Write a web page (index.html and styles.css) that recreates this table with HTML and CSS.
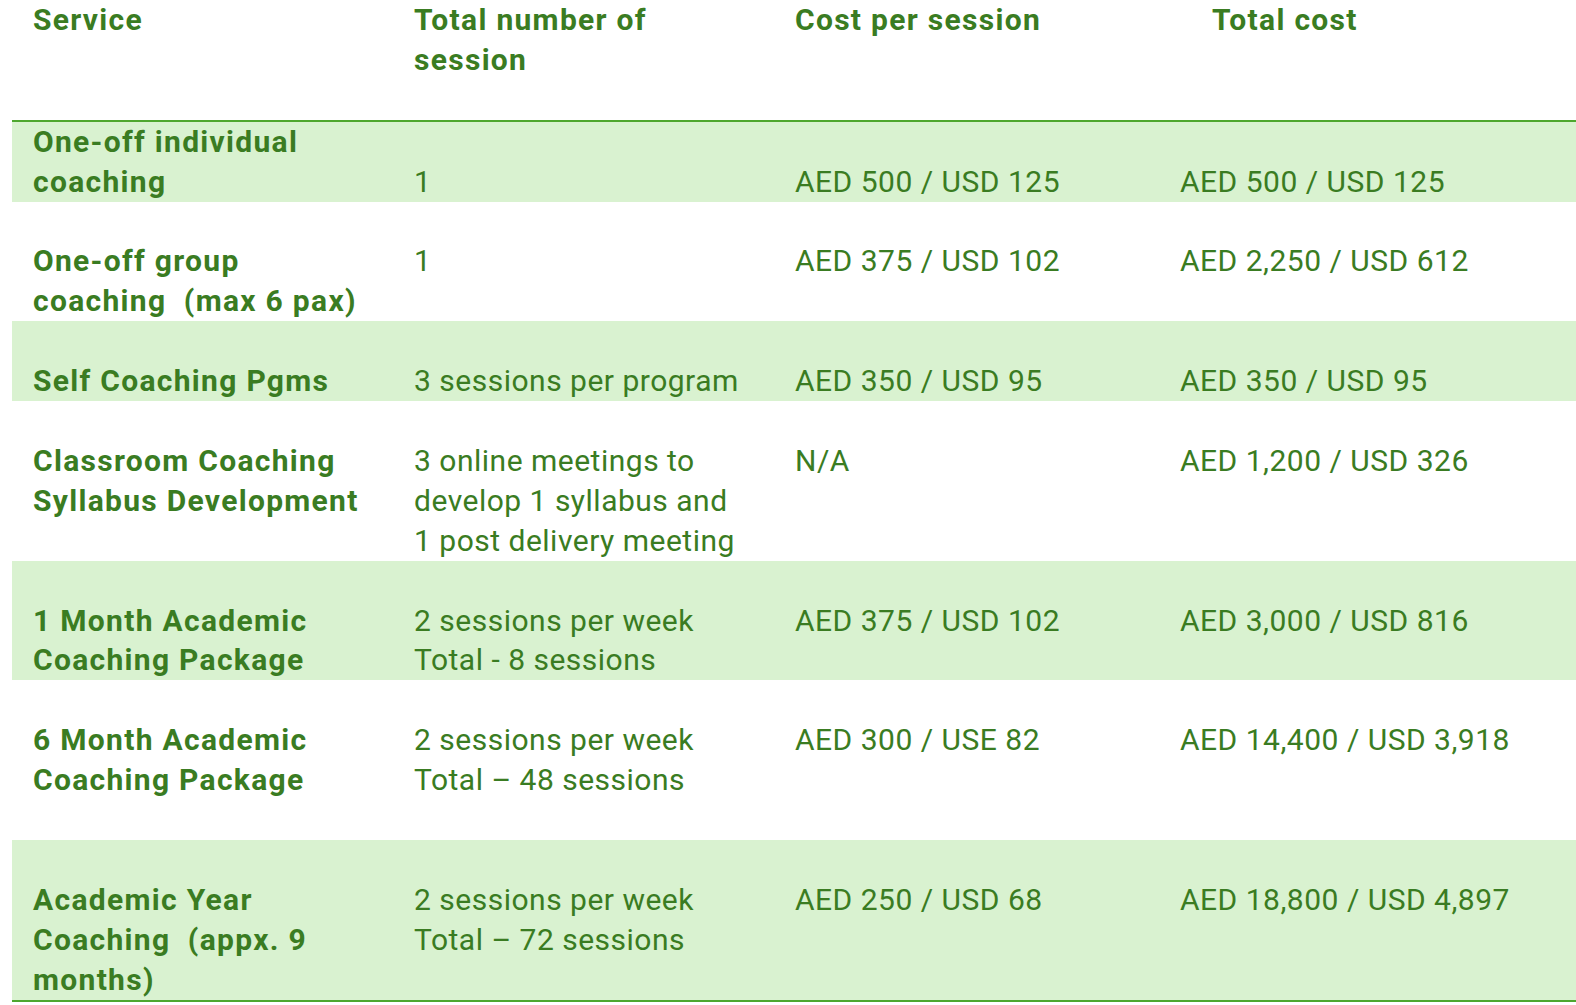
FILE: index.html
```html
<!DOCTYPE html>
<html lang="en">
<head>
<meta charset="utf-8">
<title>Coaching pricing</title>
<link rel="stylesheet" href="styles.css">
</head>
<body>
<table class="price-table">
  <colgroup>
    <col class="c1"><col class="c2"><col class="c3"><col class="c4">
  </colgroup>
  <thead>
    <tr class="head">
      <th>Service</th>
      <th>Total number of<br>session</th>
      <th>Cost per session</th>
      <th class="th-total">Total cost</th>
    </tr>
  </thead>
  <tbody>
    <tr class="shade r1">
      <td class="svc first">One-off individual<br>coaching</td>
      <td>1</td>
      <td>AED 500 / USD 125</td>
      <td>AED 500 / USD 125</td>
    </tr>
    <tr>
      <td class="svc">One-off group<br>coaching&nbsp; (max 6 pax)</td>
      <td>1</td>
      <td>AED 375 / USD 102</td>
      <td>AED 2,250 / USD 612</td>
    </tr>
    <tr class="shade">
      <td class="svc">Self Coaching Pgms</td>
      <td>3 sessions per program</td>
      <td>AED 350 / USD 95</td>
      <td>AED 350 / USD 95</td>
    </tr>
    <tr>
      <td class="svc">Classroom Coaching<br>Syllabus Development</td>
      <td>3 online meetings to<br>develop 1 syllabus and<br>1 post delivery meeting</td>
      <td>N/A</td>
      <td>AED 1,200 / USD 326</td>
    </tr>
    <tr class="shade">
      <td class="svc">1 Month Academic<br>Coaching Package</td>
      <td>2 sessions per week<br>Total - 8 sessions</td>
      <td>AED 375 / USD 102</td>
      <td>AED 3,000 / USD 816</td>
    </tr>
    <tr class="tail">
      <td class="svc">6 Month Academic<br>Coaching Package</td>
      <td>2 sessions per week<br>Total – 48 sessions</td>
      <td>AED 300 / USE 82</td>
      <td>AED 14,400 / USD 3,918</td>
    </tr>
    <tr class="shade last">
      <td class="svc">Academic Year<br>Coaching&nbsp; (appx. 9<br>months)</td>
      <td>2 sessions per week<br>Total – 72 sessions</td>
      <td>AED 250 / USD 68</td>
      <td>AED 18,800 / USD 4,897</td>
    </tr>
  </tbody>
</table>
</body>
</html>
```

FILE: styles.css
```css
html, body {
  margin: 0;
  padding: 0;
  background: #ffffff;
}

body {
  padding-left: 12px;
  overflow: hidden;
  font-family: Roboto, "Liberation Sans", sans-serif;
  color: #3a7c22;
}

.price-table {
  border-collapse: collapse;
  table-layout: fixed;
  width: 1600px;
  font-size: 30px;
  line-height: 39.9px;
  letter-spacing: 0.5px;
}

.c1 { width: 381px; }
.c2 { width: 381px; }
.c3 { width: 385px; }
.c4 { width: 453px; }

.price-table th,
.price-table td {
  padding: 39.9px 0 0 21px;
  vertical-align: top;
  text-align: left;
  white-space: nowrap;
}

.price-table th {
  padding-top: 0;
  padding-bottom: 39.9px;
  font-weight: 700;
  letter-spacing: 1.3px;
}

.price-table .th-total {
  padding-left: 53px;
}

.head {
  border-bottom: 2px solid #4ea72e;
}

.svc {
  font-weight: 700;
  letter-spacing: 1.3px;
}

.price-table td.first {
  padding-top: 0;
}

.shade {
  background: #d9f2d0;
}

.tail td {
  padding-bottom: 39.9px;
}

.last {
  border-bottom: 2px solid #4ea72e;
}
```
